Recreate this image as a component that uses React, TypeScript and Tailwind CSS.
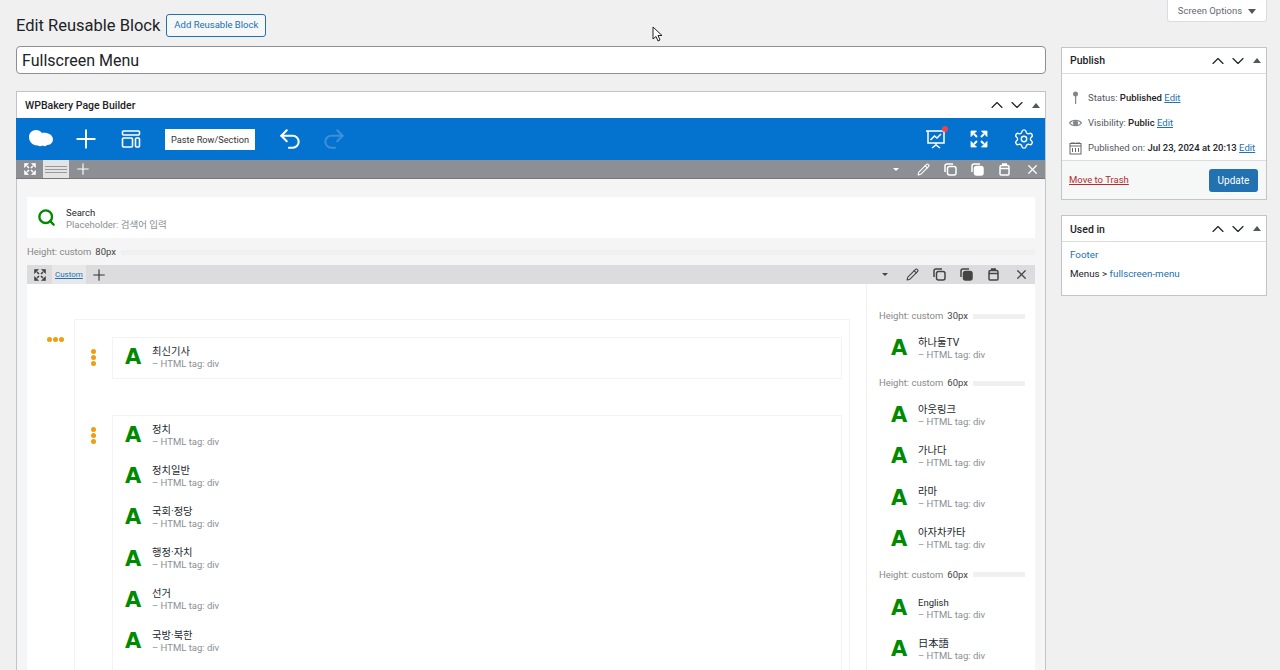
import { ChevronUp, ChevronDown, Plus, Pencil, X, Search, Undo2, Redo2, Settings } from 'lucide-react';

const font = 'font-["Roboto","Noto_Sans_CJK_KR",sans-serif]';

const MetaBoxArrows = () => (
  <div className="flex items-center text-[#1d2327]">
    <ChevronUp size={20} strokeWidth={1.4} />
    <ChevronDown size={20} strokeWidth={1.4} />
    <span className="ml-[5px] h-0 w-0 border-x-[4px] border-b-[5px] border-x-transparent border-b-[#50575e]" />
  </div>
);

const Element = ({ title, latin }: { title: string; latin?: boolean }) => (
  <div className="flex h-[41.2px] items-center">
    <span className='w-[39px] pb-[2px] pl-[12px] font-["DejaVu_Sans",sans-serif] text-[21px] font-bold leading-none text-[#008a00]'>A</span>
    <div className="mb-[2px]">
      <div className={latin ? 'text-[9.500px] leading-[12px] text-[#23282d]' : 'text-[10.300px] leading-[12px] text-[#23282d]'}>{title}</div>
      <div className="text-[9.500px] leading-[12px] text-[#8a8f94]">– HTML tag: div</div>
    </div>
  </div>
);

const HeightRow = ({ value, className }: { value: string; className?: string }) => (
  <div className={`flex h-[20px] items-center gap-[4px] text-[9.500px] text-[#888] ${className ?? ''}`}>
    <span>Height: custom</span>
    <span className="text-[#444]">{value}</span>
    <span className="ml-[1px] h-[5px] flex-1 bg-[#f0f0f0]" />
  </div>
);

const Dots = ({ row }: { row?: boolean }) => (
  <div className={row ? 'flex gap-[1px]' : 'flex flex-col gap-[1px]'}>
    <span className="h-[5px] w-[5px] rounded-full bg-[#f39c12]" />
    <span className="h-[5px] w-[5px] rounded-full bg-[#f39c12]" />
    <span className="h-[5px] w-[5px] rounded-full bg-[#f39c12]" />
  </div>
);

const CopyIcon = ({ color, solid }: { color: string; solid?: boolean }) => (
  <svg width="13" height="13" viewBox="0 0 13 13" fill="none" stroke={color} strokeWidth="1.500">
    <path d="M1 9V3a2 2 0 0 1 2-2h6" />
    <rect x="3.500" y="3.500" width="8.500" height="8.500" rx="2" fill={solid ? color : 'none'} />
  </svg>
);

const JarIcon = ({ color }: { color: string }) => (
  <svg width="13" height="13" viewBox="0 0 13 13" fill="none" stroke={color} strokeWidth="1.500">
    <path d="M3.500 2.500h6a1.500 1.500 0 0 1 1.500 1.500v7a1 1 0 0 1-1 1H3a1 1 0 0 1-1-1V4a1.500 1.500 0 0 1 1.500-1.500zM4 1h5M2 5.500h9" />
  </svg>
);

const RowTools = ({ color }: { color: string }) => (
  <div className="flex items-center gap-[14px]" style={{ color }}>
    <span className="mr-[4px] h-0 w-0 border-x-[3px] border-t-[3px] border-x-transparent" style={{ borderTopColor: color }} />
    <Pencil size={13} />
    <CopyIcon color={color} />
    <CopyIcon color={color} solid />
    <JarIcon color={color} />
    <X size={15} strokeWidth={2} />
  </div>
);

const ExpandIcon = ({ color }: { color: string }) => (
  <svg width="12" height="12" viewBox="0 0 12 12" fill={color} stroke={color} strokeWidth="0.600">
    <path d="M.5.500h4l-4 4zM11.500.500v4l-4-4zM.5 11.500v-4l4 4zM11.500 11.500h-4l4-4z" />
    <path d="M3 3l2 2M9 3L7 5M3 9l2-2M9 9L7 7" strokeWidth="1.600" />
  </svg>
);

export default function App() {
  return (
    <div className={`${font} relative h-[670px] overflow-hidden bg-[#f0f0f1] text-[13px] text-[#1d2327]`}>
      <div className="absolute right-[13px] top-0 flex h-[22px] w-[100px] items-center justify-center gap-[6px] rounded-b-[3px] border border-t-0 border-[#dcdcde] bg-white pt-[1px] text-[9.500px] text-[#646970]">
        Screen Options
        <span className="h-0 w-0 border-x-[4px] border-t-[5px] border-x-transparent border-t-[#50575e]" />
      </div>

      <div className="flex items-start gap-[15px] pl-[16px] pr-[13px]">
        <div className="w-[1030px] shrink-0">
          <div className="flex h-[46px] items-center gap-[6px] pt-[5px]">
            <h1 className="pt-[1px] text-[16.500px] leading-none">Edit Reusable Block</h1>
            <span className="flex h-[23px] items-center rounded-[3px] border border-[#2271b1] bg-[#f6f7f7] px-[7px] text-[9.500px] text-[#2271b1]">Add Reusable Block</span>
          </div>
          <div className="flex h-[28px] items-center rounded-[4px] border border-[#8c8f94] bg-white px-[5px] pt-[2px] text-[16px]">Fullscreen Menu</div>

          <div className="mt-[17px] h-[600px] border border-[#c3c4c7] bg-[#f5f5f5]">
            <div className="flex h-[26px] items-center justify-between bg-white pl-[8px] pr-[5px]">
              <span className="pt-[1px] text-[10.500px] font-medium">WPBakery Page Builder</span>
              <MetaBoxArrows />
            </div>
            <div className="-ml-px flex h-[42px] items-center bg-[#0473cf] pl-[13px] pr-[10px] text-white">
              <svg width="24" height="20" viewBox="0 0 24 20" fill="white">
                <path d="M7 1c3 0 5 1.500 6 3 3-.5 10 0 11 6 0 5-4 6-6 6-1 1.500-3 1.500-4 .5-2 1-4 1-5 0C4 17 0 13 0 8c0-4 3-7 7-7z" />
              </svg>
              <Plus className="ml-[18px]" size={30} strokeWidth={1.5} />
              <svg className="ml-[20px]" width="20" height="20" viewBox="0 0 20 20" fill="none" stroke="white" strokeWidth="1.600">
                <rect x="1.500" y="2" width="17" height="4" rx="1" />
                <rect x="1.500" y="9" width="10" height="9" rx="1" />
                <rect x="14.500" y="9" width="4" height="9" rx="1" />
              </svg>
              <span className="ml-[24px] flex h-[21px] w-[90px] items-center justify-center bg-white pt-[1px] text-[9.200px] text-[#333]">Paste Row/Section</span>
              <Undo2 className="ml-[22px]" size={26} strokeWidth={1.9} />
              <Redo2 className="ml-[18px] text-[#3d8fd8]" size={26} strokeWidth={1.9} />
              <div className="ml-auto flex items-center gap-[22px]">
                <span className="relative">
                  <svg width="22" height="22" viewBox="0 0 22 22" fill="none" stroke="white" strokeWidth="1.500">
                    <path d="M1 3h20M3 3v12h16V3M5.500 12l4-4 2.500 2 4-4M11 15v2M7 20l4-3 4 3" />
                  </svg>
                  <span className="absolute right-[-1px] top-[-2px] h-[6px] w-[6px] rounded-full bg-[#f4404a]" />
                </span>
                <svg width="20" height="20" viewBox="0 0 20 20" fill="white" stroke="white" strokeWidth="0.800">
                  <path d="M2 2h5.500L2 7.500zM18 2v5.500L12.500 2zM2 18v-5.500L7.500 18zM18 18h-5.500l5.500-5.500z" />
                  <path d="M5 5l3 3M15 5l-3 3M5 15l3-3M15 15l-3-3" strokeWidth="2" />
                </svg>
                <Settings className="ml-[2px]" size={22} strokeWidth={1.5} />
              </div>
            </div>
            <div className="-ml-px flex h-[19px] items-center justify-between border-b border-[#777] bg-[#8c8f94] pr-[5px] text-white">
              <div className="flex h-full items-center">
                <span className="ml-[8px]"><ExpandIcon color="white" /></span>
                <span className="ml-[7px] flex h-full w-[26px] flex-col items-center justify-center gap-[2px] bg-[#e4e4e4]">
                  <span className="h-px w-[22px] bg-[#999]" />
                  <span className="h-px w-[22px] bg-[#999]" />
                  <span className="h-px w-[22px] bg-[#999]" />
                </span>
                <Plus className="ml-[5px]" size={18} strokeWidth={1.5} />
              </div>
              <RowTools color="#ffffff" />
            </div>

            <div className="px-[10px] pt-[18px]">
              <div className="flex h-[41px] items-center bg-white pl-[10px]">
                <Search size={19} strokeWidth={3} className="text-[#008a00]" />
                <div className="ml-[10px] pt-[2px]">
                  <div className="text-[9.500px] leading-[12px] text-[#23282d]">Search</div>
                  <div className="text-[9.500px] leading-[12px] text-[#8a8f94]">Placeholder: 검색어 입력</div>
                </div>
              </div>
              <div className="flex h-[27px] items-center pt-[2px]"><HeightRow value="80px" className="w-full" /></div>
              <div className="flex h-[19px] items-center justify-between bg-[#dcdcde] pr-[6px] text-[#333]">
                <div className="flex h-full items-center">
                  <span className="ml-[7px]"><ExpandIcon color="#444" /></span>
                  <span className="ml-[6px] flex h-full items-center bg-[#e8e8e8] px-[3px] text-[8px] text-[#2271b1] underline">Custom</span>
                  <Plus className="ml-[4px]" size={18} strokeWidth={1.5} />
                </div>
                <RowTools color="#444444" />
              </div>
              <div className="flex h-[400px] bg-white">
                <div className="w-[840px] shrink-0 border-r border-[#f0f0f0] pt-[35px]">
                  <div className="flex items-start">
                    <div className="flex w-[47px] justify-end pr-[10px] pt-[18px]"><Dots row /></div>
                    <div className="h-[400px] w-[776px] border border-[#f3f3f3] pl-[4px] pr-[7px] pt-[17px]">
                      <div className="flex">
                        <div className="w-[33px] pl-[12px] pt-[12px]"><Dots /></div>
                        <div className="h-[42px] flex-1 border border-[#f3f3f3]"><Element title="최신기사" /></div>
                      </div>
                      <div className="mt-[36px] flex">
                        <div className="w-[33px] pl-[12px] pt-[12px]"><Dots /></div>
                        <div className="h-[300px] flex-1 border border-[#f3f3f3]">
                          {['정치', '정치일반', '국회·정당', '행정·자치', '선거', '국방·북한'].map((t) => (
                            <Element key={t} title={t} />
                          ))}
                        </div>
                      </div>
                    </div>
                  </div>
                </div>
                <div className="flex-1 pl-[12px] pr-[10px] pt-[22px]">
                  <HeightRow value="30px" className="mb-[3px]" />
                  <Element title="하나둘TV" />
                  <HeightRow value="60px" className="mb-[3px] mt-[3px]" />
                  <Element title="아웃링크" />
                  <Element title="가나다" />
                  <Element title="라마" />
                  <Element title="아자차카타" />
                  <HeightRow value="60px" className="mb-[4px] mt-[4px]" />
                  <Element title="English" latin />
                  <Element title="日本語" />
                </div>
              </div>
            </div>
          </div>
        </div>

        <div className="w-[206px] shrink-0 pt-[47px] text-[9.500px]">
          <div className="border border-[#c3c4c7] bg-white">
            <div className="flex h-[26px] items-center justify-between border-b border-[#dcdcde] pl-[8px] pr-[5px]">
              <span className="pt-[1px] text-[10.500px] font-medium">Publish</span>
              <MetaBoxArrows />
            </div>
            <div className="space-y-[7px] pb-[3px] pl-[7px] pt-[15px] text-[#50575e]">
              <div className="flex h-[18px] items-center whitespace-nowrap">
                <svg className="mr-[6px] shrink-0" width="13" height="14" viewBox="0 0 13 14" fill="#82878c">
                  <circle cx="6.500" cy="3" r="2.500" />
                  <rect x="6" y="5" width="1.200" height="8" />
                </svg>
                Status:&nbsp;<b className="font-medium text-[#1d2327]">Published</b>&nbsp;<span className="text-[#2271b1] underline">Edit</span>
              </div>
              <div className="flex h-[18px] items-center whitespace-nowrap">
                <svg className="mr-[6px] shrink-0" width="13" height="14" viewBox="0 0 13 14" fill="none" stroke="#82878c" strokeWidth="1.200">
                  <path d="M.5 7C3 3.500 10 3.500 12.500 7 10 10.500 3 10.500.5 7z" />
                  <circle cx="6.500" cy="7" r="2" fill="#82878c" />
                </svg>
                Visibility:&nbsp;<b className="font-medium text-[#1d2327]">Public</b>&nbsp;<span className="text-[#2271b1] underline">Edit</span>
              </div>
              <div className="flex h-[18px] items-center whitespace-nowrap">
                <svg className="mr-[6px] shrink-0" width="13" height="14" viewBox="0 0 13 14" fill="none" stroke="#666" strokeWidth="1">
                  <rect x="1" y="2.500" width="11" height="10.500" />
                  <path d="M1 5h11M3 1v2M5 1v2M8 1v2M10 1v2M3.500 7v4M6.500 7v4M9.500 7v4" />
                </svg>
                Published on:&nbsp;<b className="font-medium text-[#1d2327]">Jul 23, 2024 at 20:13</b>&nbsp;<span className="text-[#2271b1] underline">Edit</span>
              </div>
            </div>
            <div className="flex h-[39px] items-center justify-between border-t border-[#dcdcde] bg-[#f6f7f7] pl-[7px] pr-[8px]">
              <span className="pt-[1px] text-[#b32d2e] underline">Move to Trash</span>
              <span className="flex h-[23px] w-[49px] items-center justify-center rounded-[3px] bg-[#2271b1] text-[10px] text-white">Update</span>
            </div>
          </div>
          <div className="mt-[15px] h-[81px] border border-[#c3c4c7] bg-white">
            <div className="flex h-[26px] items-center justify-between border-b border-[#dcdcde] pl-[8px] pr-[5px]">
              <span className="pt-[2px] text-[10.500px] font-medium">Used in</span>
              <MetaBoxArrows />
            </div>
            <div className="px-[8px] pt-[3px] text-[9.800px] leading-[19px]">
              <div className="text-[#2271b1]">Footer</div>
              <div>Menus &gt; <span className="text-[#2271b1]">fullscreen-menu</span></div>
            </div>
          </div>
        </div>
      </div>

      <svg className="absolute left-[652px] top-[26px]" width="11" height="17" viewBox="0 0 11 17" fill="white" stroke="#222" strokeWidth="1">
        <path d="M1 1v12l3-2.500 2 4.500 2-1-2-4.500h4z" />
      </svg>
    </div>
  );
}
